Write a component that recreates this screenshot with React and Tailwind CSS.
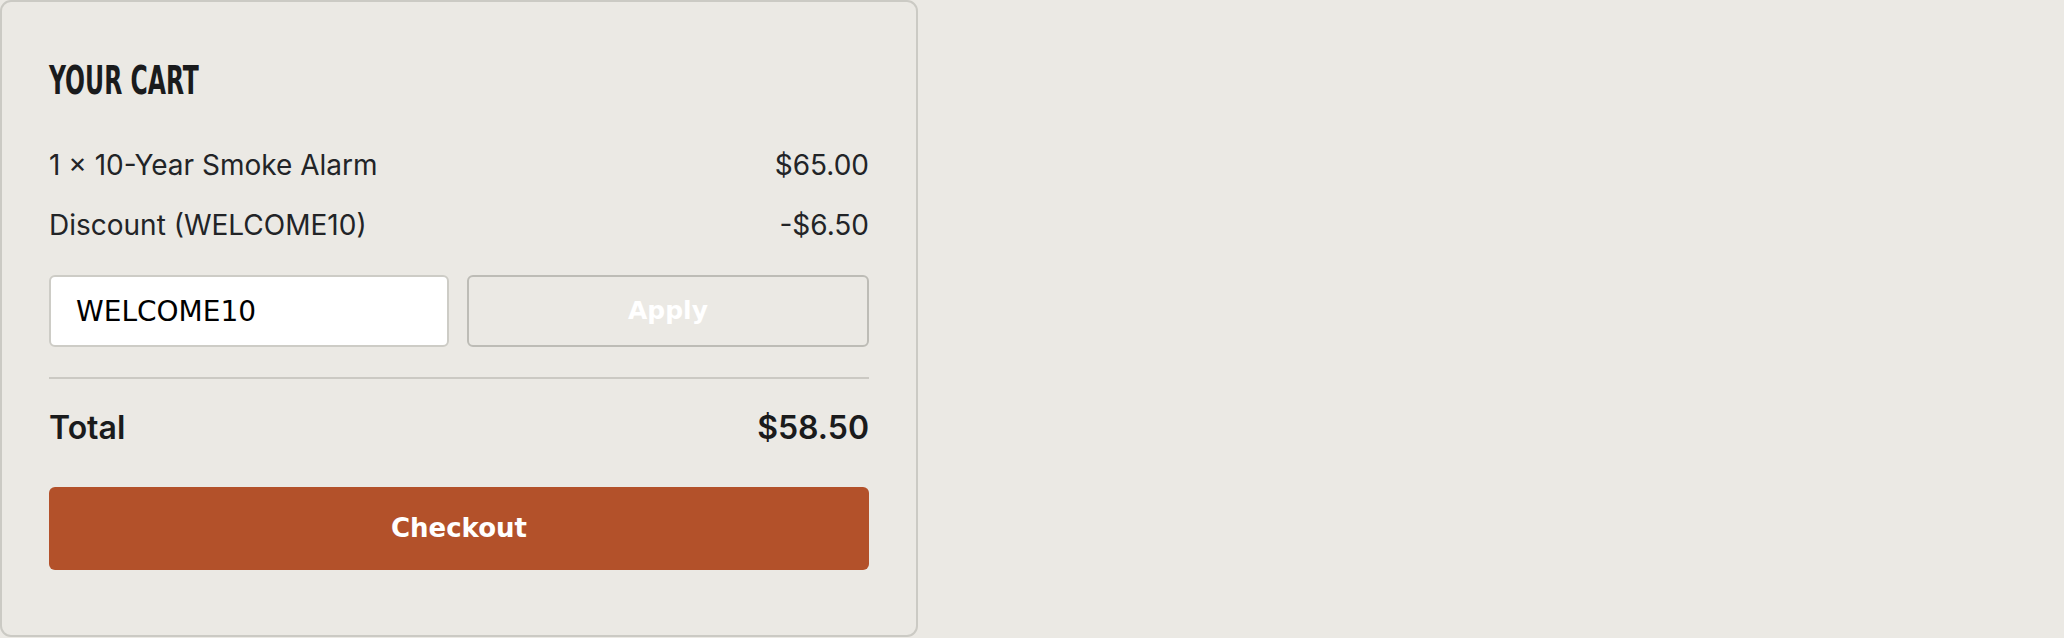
const inter = { fontFamily: "Inter, 'Noto Sans', sans-serif" };

export default function App() {
  return (
    <div className="min-h-[638px] w-full bg-[#ebe9e4]">
      {/* Cart card */}
      <section className="box-border flex h-[637px] w-[918px] flex-col rounded-[11px] border-2 border-[#cbcac4] bg-[#ebe9e4] px-[47px] pt-[59px]">
        <h2 className="h-[40px] text-[39px] font-bold uppercase leading-[40px] text-[#1a1b1c] [font-family:'Liberation_Sans_Narrow','DejaVu_Sans_Condensed',sans-serif]">
          <span className="inline-block origin-left scale-x-[0.67]">Your Cart</span>
        </h2>

        {/* Line items */}
        <div className="mt-[44px] flex flex-col gap-[20px] text-[28px] leading-[40px] text-[#222427]" style={inter}>
          <div className="flex items-center justify-between">
            <span>1 × 10-Year Smoke Alarm</span>
            <span>$65.00</span>
          </div>
          <div className="flex items-center justify-between">
            <span>Discount (WELCOME10)</span>
            <span>-$6.50</span>
          </div>
        </div>

        {/* Promo code */}
        <div className="mt-[30px] flex gap-[18px] [font-family:'DejaVu_Sans',sans-serif]">
          <input
            defaultValue="WELCOME10"
            className="box-border h-[72px] w-[400px] rounded-[6px] border-2 border-[#cdccc6] bg-white px-[25px] text-[28px] text-black outline-none"
          />
          <button className="box-border h-[72px] flex-1 rounded-[6px] border-2 border-[#bdbcb6] bg-transparent text-[25px] font-bold text-white">
            Apply
          </button>
        </div>

        <div className="mt-[30px] h-[2px] bg-[#cbc9c3]" />

        {/* Total */}
        <div className="mt-[29px] flex items-center justify-between text-[32px] font-semibold leading-[40px] text-[#1a1b1c]" style={inter}>
          <span>Total</span>
          <span>$58.50</span>
        </div>

        <button className="mt-[39px] h-[83px] w-full rounded-[6px] bg-[#b3512a] text-[26px] font-bold text-white [font-family:'DejaVu_Sans',sans-serif]">
          Checkout
        </button>
      </section>
    </div>
  );
}
